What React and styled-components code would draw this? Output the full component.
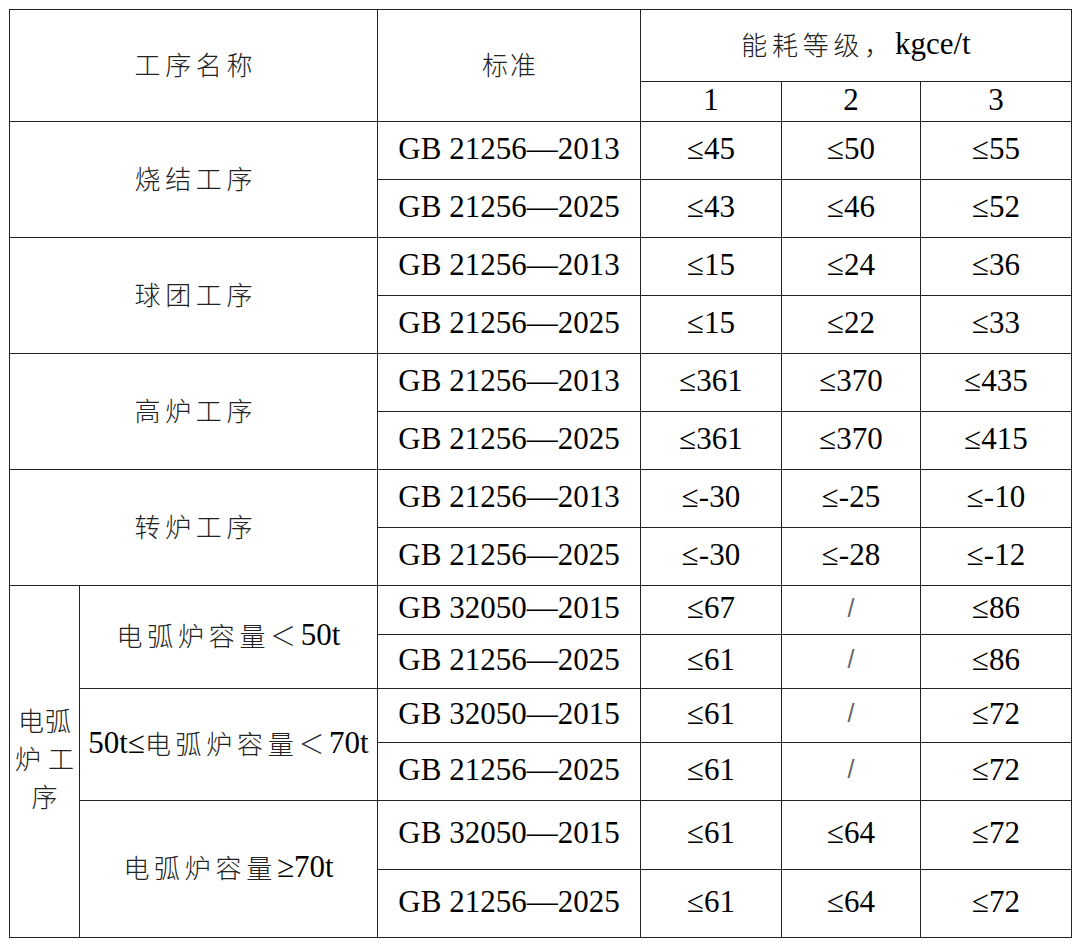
import React from 'react';
import styled, { createGlobalStyle } from 'styled-components';

const Global = createGlobalStyle`
  html, body { margin: 0; padding: 0; background: #fff; }
  body { font-family: "Liberation Serif", "Noto Sans CJK SC", serif; }
`;

const Page = styled.div`
  padding: 9px;
  width: 1080px;
  height: 951px;
  box-sizing: border-box;
  background: #fff;
`;

const Grid = styled.div`
  display: grid;
  grid-template-columns: 69px 297px 262px 140px 138px 150px;
  grid-template-rows: 71px 39px repeat(8, 57px) 48px 53px 53px 57px 68px 67px;
  gap: 1px;
  padding: 1px;
  background: #222;
  width: max-content;
`;

const Cell = styled.div`
  grid-column: ${(p) => p.$col};
  grid-row: ${(p) => p.$row};
  background: #fff;
  display: flex;
  align-items: center;
  justify-content: center;
  padding-bottom: 4px;
  box-sizing: border-box;
  font-family: "Liberation Serif", "Times New Roman", serif;
  font-size: 31px;
  color: #000;
  white-space: nowrap;
`;

const StackCell = styled(Cell)`
  flex-direction: column;
  gap: 7px;
  padding-bottom: 8px;
`;

const Han = styled.span`
  font-family: "Noto Sans CJK SC", sans-serif;
  font-weight: 300;
  font-size: 26px;
  line-height: 1.2;
  color: #222;
  letter-spacing: ${(p) => p.$ls ?? 4.7}px;
  margin-right: ${(p) => (p.$trim ? -(p.$ls ?? 4.7) : 0)}px;
`;

const Slash = styled.span`
  font-family: "Liberation Sans", sans-serif;
  font-size: 25px;
  color: #666;
`;

const processes = [
  { name: '烧结工序', rows: [['GB 21256—2013', '≤45', '≤50', '≤55'], ['GB 21256—2025', '≤43', '≤46', '≤52']] },
  { name: '球团工序', rows: [['GB 21256—2013', '≤15', '≤24', '≤36'], ['GB 21256—2025', '≤15', '≤22', '≤33']] },
  { name: '高炉工序', rows: [['GB 21256—2013', '≤361', '≤370', '≤435'], ['GB 21256—2025', '≤361', '≤370', '≤415']] },
  { name: '转炉工序', rows: [['GB 21256—2013', '≤-30', '≤-25', '≤-10'], ['GB 21256—2025', '≤-30', '≤-28', '≤-12']] },
];

const eaf = [
  {
    label: (
      <>
        <Han>电弧炉容量＜</Han>50t
      </>
    ),
    rows: [['GB 32050—2015', '≤67', '/', '≤86'], ['GB 21256—2025', '≤61', '/', '≤86']],
  },
  {
    label: (
      <>
        50t≤<Han>电弧炉容量＜</Han>70t
      </>
    ),
    rows: [['GB 32050—2015', '≤61', '/', '≤72'], ['GB 21256—2025', '≤61', '/', '≤72']],
  },
  {
    label: (
      <>
        <Han>电弧炉容量</Han>≥70t
      </>
    ),
    rows: [['GB 32050—2015', '≤61', '≤64', '≤72'], ['GB 21256—2025', '≤61', '≤64', '≤72']],
  },
];

const Value = ({ v }) => (v === '/' ? <Slash>/</Slash> : v);

const DataCells = ({ row, r }) =>
  row.map((v, i) => (
    <Cell key={i} $col={`${i + 3}`} $row={`${r}`}>
      <Value v={v} />
    </Cell>
  ));

export default function App() {
  return (
    <Page>
      <Global />
      <Grid>
        <Cell $col="1 / 3" $row="1 / 3">
          <Han $trim>工序名称</Han>
        </Cell>
        <Cell $col="3" $row="1 / 3">
          <Han $ls={2} $trim>标准</Han>
        </Cell>
        <Cell $col="4 / 7" $row="1">
          <Han>能耗等级，</Han>kgce/t
        </Cell>
        <Cell $col="4" $row="2">1</Cell>
        <Cell $col="5" $row="2">2</Cell>
        <Cell $col="6" $row="2">3</Cell>

        {processes.map((p, pi) => {
          const r0 = 3 + pi * 2;
          return (
            <React.Fragment key={p.name}>
              <Cell $col="1 / 3" $row={`${r0} / ${r0 + 2}`}>
                <Han $trim>{p.name}</Han>
              </Cell>
              <DataCells row={p.rows[0]} r={r0} />
              <DataCells row={p.rows[1]} r={r0 + 1} />
            </React.Fragment>
          );
        })}

        <StackCell $col="1" $row="11 / 17">
          <Han $ls={1} $trim>电弧</Han>
          <Han $ls={7} $trim>炉工</Han>
          <Han $trim>序</Han>
        </StackCell>

        {eaf.map((g, gi) => {
          const r0 = 11 + gi * 2;
          return (
            <React.Fragment key={gi}>
              <Cell $col="2" $row={`${r0} / ${r0 + 2}`}>{g.label}</Cell>
              <DataCells row={g.rows[0]} r={r0} />
              <DataCells row={g.rows[1]} r={r0 + 1} />
            </React.Fragment>
          );
        })}
      </Grid>
    </Page>
  );
}
